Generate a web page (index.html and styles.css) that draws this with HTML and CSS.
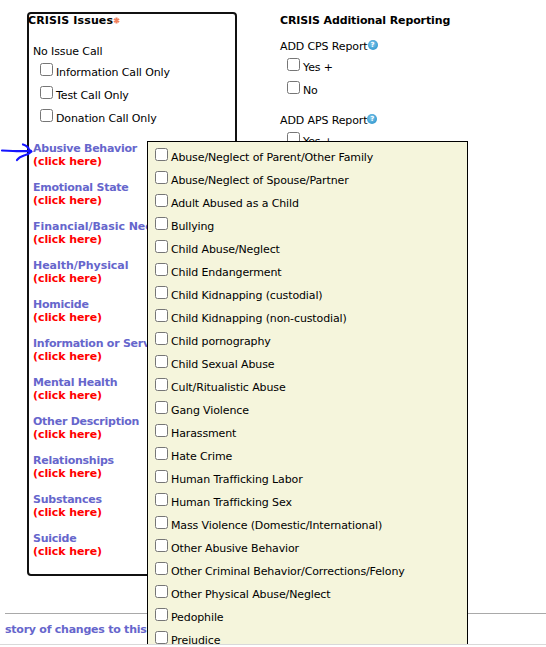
FILE: index.html
```
<!DOCTYPE html>
<html lang="en">
<head>
<meta charset="utf-8">
<title>Crisis Issues</title>
<link rel="stylesheet" href="styles.css">
</head>
<body>
<div class="page">
  <main class="columns">
    <section class="issues">
      <h2>CRISIS Issues<svg class="star" viewBox="0 0 7 7"><path d="M3.5 .5v6M.9 2l5.200 3M6.100 2L.9 5"/></svg></h2>
      <div class="call">
        <p>No Issue Call</p>
        <label class="row"><input type="checkbox"><span>Information Call Only</span></label>
        <label class="row"><input type="checkbox"><span>Test Call Only</span></label>
        <label class="row"><input type="checkbox"><span>Donation Call Only</span></label>
      </div>
      <ul class="categories">
        <li>Abusive Behavior<b>(click here)</b></li>
        <li>Emotional State<b>(click here)</b></li>
        <li class="loose">Financial/Basic Needs<b>(click here)</b></li>
        <li class="loose">Health/Physical<b>(click here)</b></li>
        <li>Homicide<b>(click here)</b></li>
        <li>Information or Services<b>(click here)</b></li>
        <li>Mental Health<b>(click here)</b></li>
        <li>Other Description<b>(click here)</b></li>
        <li>Relationships<b>(click here)</b></li>
        <li>Substances<b>(click here)</b></li>
        <li>Suicide<b>(click here)</b></li>
      </ul>
    </section>
    <section class="reporting">
      <h2>CRISIS Additional Reporting</h2>
      <div class="report">
        <p>ADD CPS Report<i class="help">?</i></p>
        <label class="row"><input type="checkbox"><span>Yes +</span></label>
        <label class="row"><input type="checkbox"><span>No</span></label>
      </div>
      <div class="report">
        <p>ADD APS Report<i class="help">?</i></p>
        <label class="row"><input type="checkbox"><span>Yes +</span></label>
      </div>
    </section>
  </main>
  <footer>story of changes to this</footer>
  <svg class="arrow" viewBox="0 0 34 22"><path d="M2 10.500L13 11Q22 11.500 31 10.800M23 4.500Q28 6 29 9.500L31.500 11.500Q28 15 24 15.500Q19 17 17 20"/></svg>
  <div class="popup">
    <label class="row"><input type="checkbox"><span>Abuse/Neglect of Parent/Other Family</span></label>
    <label class="row"><input type="checkbox"><span>Abuse/Neglect of Spouse/Partner</span></label>
    <label class="row"><input type="checkbox"><span>Adult Abused as a Child</span></label>
    <label class="row"><input type="checkbox"><span>Bullying</span></label>
    <label class="row"><input type="checkbox"><span>Child Abuse/Neglect</span></label>
    <label class="row"><input type="checkbox"><span>Child Endangerment</span></label>
    <label class="row"><input type="checkbox"><span>Child Kidnapping (custodial)</span></label>
    <label class="row"><input type="checkbox"><span>Child Kidnapping (non-custodial)</span></label>
    <label class="row"><input type="checkbox"><span>Child pornography</span></label>
    <label class="row"><input type="checkbox"><span>Child Sexual Abuse</span></label>
    <label class="row"><input type="checkbox"><span>Cult/Ritualistic Abuse</span></label>
    <label class="row"><input type="checkbox"><span>Gang Violence</span></label>
    <label class="row"><input type="checkbox"><span>Harassment</span></label>
    <label class="row"><input type="checkbox"><span>Hate Crime</span></label>
    <label class="row"><input type="checkbox"><span>Human Trafficking Labor</span></label>
    <label class="row"><input type="checkbox"><span>Human Trafficking Sex</span></label>
    <label class="row"><input type="checkbox"><span>Mass Violence (Domestic/International)</span></label>
    <label class="row"><input type="checkbox"><span>Other Abusive Behavior</span></label>
    <label class="row"><input type="checkbox"><span>Other Criminal Behavior/Corrections/Felony</span></label>
    <label class="row"><input type="checkbox"><span>Other Physical Abuse/Neglect</span></label>
    <label class="row"><input type="checkbox"><span>Pedophile</span></label>
    <label class="row"><input type="checkbox"><span>Prejudice</span></label>
  </div>
</div>
</body>
</html>
```
FILE: styles.css
```
* { box-sizing: border-box; }
body { margin: 0; background: #fff; color: #000; font: 11px/13px Verdana, "DejaVu Sans", sans-serif; letter-spacing: -0.12px; white-space: nowrap; overflow: hidden; }
.page { position: relative; width: 546px; height: 645px; padding-top: 12px; overflow: hidden; border-bottom: 1px solid #d9d9d9; }
h2, p, ul { margin: 0; padding: 0; }
h2 { font-size: 11px; line-height: 13px; }
.columns { display: flex; gap: 43px; padding-left: 27px; }
.issues { width: 210px; height: 564px; border: 2px solid #111; border-radius: 4px; }
.issues h2 { margin-left: -1px; letter-spacing: 0.13px; }
.star { width: 7px; height: 7px; vertical-align: 0; fill: none; stroke: #f0805c; stroke-width: 2; }
.call { padding: 18px 0 0 4px; }
.call p { height: 16px; }
.row { display: flex; height: 23px; padding-left: 7px; }
.row input { appearance: none; flex: none; width: 13px; height: 13px; margin: 2px 3px 0 0; background: #fff; border: 1px solid #767676; border-radius: 2.5px; }
.row span { padding-top: 5px; }
.categories { list-style: none; padding: 12px 0 0 4px; font-weight: bold; color: #6666cc; letter-spacing: -0.25px; }
.categories li { height: 39px; }
.categories .loose { letter-spacing: -0.04px; }
.categories b { display: block; color: #f00; letter-spacing: -0.08px; }
.reporting { padding-top: 2px; }
.report { height: 74px; padding-top: 13px; }
.report p { display: flex; height: 16px; }
.help { width: 10px; height: 10px; border-radius: 50%; background: radial-gradient(circle at 45% 40%, #85caec, #3d9fd3 65%, #328abb); color: #fff; font: bold 7px/10px "DejaVu Sans", sans-serif; letter-spacing: 0; text-align: center; }
footer { height: 32px; margin: 37px 0 0 5px; padding-top: 9px; border-top: 1px solid #a9a9a9; color: #6666cc; font-weight: bold; letter-spacing: -0.24px; }
.arrow { position: absolute; left: 0; top: 140px; width: 34px; height: 22px; fill: none; stroke: #1414ff; stroke-width: 2.2; stroke-linecap: round; stroke-linejoin: round; }
.popup { position: absolute; left: 147px; top: 141px; width: 321px; height: 530px; padding-top: 4px; background: #f5f5dc; border: 1px solid #000; }
```
